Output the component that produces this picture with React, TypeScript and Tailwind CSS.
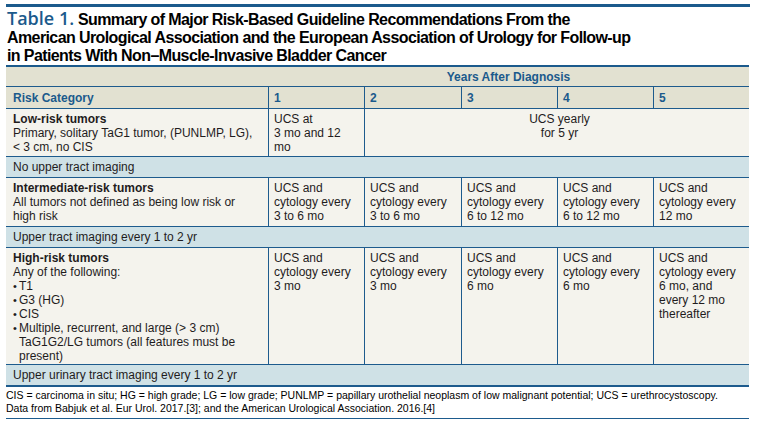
import * as React from "react";

const COLS = "grid grid-cols-[262px_96px_97px_96px_96px_96px]";

function Cell({ children, className = "" }: { children?: React.ReactNode; className?: string }) {
  return (
    <div className={`border-l border-[#1d5b8d] pl-[5px] pt-[3px] ${className}`}>{children}</div>
  );
}

function Band({ children, last = false }: { children: React.ReactNode; last?: boolean }) {
  return (
    <div
      className={`flex items-center bg-[#cfe1e6] pl-[7px] ${
        last ? "h-[22px] border-b-2" : "h-[21px] border-b"
      } border-[#1d5b8d]`}
    >
      {children}
    </div>
  );
}

function Bullet({ children }: { children: React.ReactNode }) {
  return (
    <div className="flex">
      <span className="w-[6px] shrink-0 text-[11px]">•</span>
      <span>{children}</span>
    </div>
  );
}

export default function App() {
  return (
    <div className="h-[424px] w-[758px] bg-white pl-[6px] pt-[4px] font-['Liberation_Sans',Arial,sans-serif] text-[12px] leading-[14px] text-[#1f1c1d]">
      <div className="h-[3px] w-[744px] bg-[#1b5a8c]" />

      <h1 className="mt-[2px] h-[54px] pl-[1px] text-[16px] font-bold leading-[18px] tracking-[-0.6px] text-black">
        <span className="font-['Open_Sans',sans-serif] text-[18px] font-semibold leading-none tracking-normal text-[#1b5a8c]">
          Table 1.
        </span>{" "}
        Summary of Major Risk-Based Guideline Recommendations From the
        <br />
        American Urological Association and the European Association of Urology for Follow-up
        <br />
        in Patients With Non–Muscle-Invasive Bladder Cancer
      </h1>

      <div className="mt-[2px] w-[743px] border-t-2 border-[#1b5a8c]">
        {/* years header */}
        <div className={`${COLS} h-[20px] border-b border-[#1d5b8d] bg-[#e2e1d1] font-bold text-[#1b5a8c]`}>
          <div />
          <div className="col-span-5 flex items-center justify-center">Years After Diagnosis</div>
        </div>

        <div className={`${COLS} h-[22px] border-b border-[#1d5b8d] bg-[#e2e1d1] font-bold text-[#1b5a8c]`}>
          <div className="flex items-center pl-[7px]">Risk Category</div>
          {["1", "2", "3", "4", "5"].map((n) => (
            <div key={n} className="flex items-center border-l border-[#1d5b8d] pl-[5px]">
              {n}
            </div>
          ))}
        </div>

        {/* low risk */}
        <div className={`${COLS} h-[48px] border-b border-[#1d5b8d] bg-[#f4f3ed]`}>
          <div className="pl-[7px] pt-[3px]">
            <div className="font-bold">Low-risk tumors</div>
            <div>Primary, solitary TaG1 tumor, (PUNLMP, LG),</div>
            <div>&lt; 3 cm, no CIS</div>
          </div>
          <Cell>
            UCS at
            <br />3 mo and 12
            <br />
            mo
          </Cell>
          <Cell className="col-span-4 pl-0 text-center">
            UCS yearly
            <br />
            for 5 yr
          </Cell>
        </div>

        <Band>No upper tract imaging</Band>

        {/* intermediate */}
        <div className={`${COLS} h-[49px] border-b border-[#1d5b8d] bg-[#f4f3ed]`}>
          <div className="pl-[7px] pt-[3px]">
            <div className="font-bold">Intermediate-risk tumors</div>
            <div>All tumors not defined as being low risk or</div>
            <div>high risk</div>
          </div>
          <Cell>
            UCS and
            <br />
            cytology every
            <br />3 to 6 mo
          </Cell>
          <Cell>
            UCS and
            <br />
            cytology every
            <br />3 to 6 mo
          </Cell>
          <Cell>
            UCS and
            <br />
            cytology every
            <br />6 to 12 mo
          </Cell>
          <Cell>
            UCS and
            <br />
            cytology every
            <br />6 to 12 mo
          </Cell>
          <Cell>
            UCS and
            <br />
            cytology every
            <br />
            12 mo
          </Cell>
        </div>

        <Band>Upper tract imaging every 1 to 2 yr</Band>

        {/* high risk */}
        <div className={`${COLS} h-[117px] border-b border-[#1d5b8d] bg-[#f4f3ed]`}>
          <div className="pl-[7px] pt-[3px]">
            <div className="font-bold">High-risk tumors</div>
            <div>Any of the following:</div>
            <Bullet>T1</Bullet>
            <Bullet>G3 (HG)</Bullet>
            <Bullet>CIS</Bullet>
            <Bullet>
              Multiple, recurrent, and large (&gt; 3 cm)
              <br />
              TaG1G2/LG tumors (all features must be
              <br />
              present)
            </Bullet>
          </div>
          <Cell>
            UCS and
            <br />
            cytology every
            <br />3 mo
          </Cell>
          <Cell>
            UCS and
            <br />
            cytology every
            <br />3 mo
          </Cell>
          <Cell>
            UCS and
            <br />
            cytology every
            <br />6 mo
          </Cell>
          <Cell>
            UCS and
            <br />
            cytology every
            <br />6 mo
          </Cell>
          <Cell>
            UCS and
            <br />
            cytology every
            <br />6 mo, and
            <br />
            every 12 mo
            <br />
            thereafter
          </Cell>
        </div>

        <Band last>Upper urinary tract imaging every 1 to 2 yr</Band>

        <div className="border-b border-[#1d5b8d] pb-[3px] pt-[2px] text-[10.5px] leading-[13px] text-black">
          <div>
            CIS = carcinoma in situ; HG = high grade; LG = low grade; PUNLMP = papillary urothelial neoplasm of
            low malignant potential; UCS = urethrocystoscopy.
          </div>
          <div>Data from Babjuk et al. Eur Urol. 2017.[3]; and the American Urological Association. 2016.[4]</div>
        </div>
      </div>
    </div>
  );
}
